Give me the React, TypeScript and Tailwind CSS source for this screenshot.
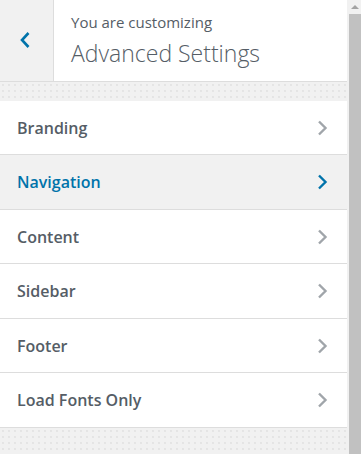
import React from "react";

const Chevron = ({ color }: { color: string }) => (
  <svg width="12" height="18" viewBox="0 0 12 18" fill="none">
    <path d="M3 2.5 L9.5 9 L3 15.5" stroke={color} strokeWidth="2.4" strokeLinecap="butt" strokeLinejoin="miter" />
  </svg>
);

const items = [
  { label: "Branding", h: "h-[54px]" },
  { label: "Navigation", h: "h-[55px]", active: true },
  { label: "Content", h: "h-[54px]" },
  { label: "Sidebar", h: "h-[55px]" },
  { label: "Footer", h: "h-[54px]" },
  { label: "Load Fonts Only", h: "h-[55px]" },
];

const dots = {
  backgroundImage: "radial-gradient(#dedede 0.6px, transparent 0.9px)",
  backgroundSize: "6px 6px",
};

export default function App() {
  return (
    <div className="flex w-[361px] h-[454px] overflow-hidden bg-[#f1f1f1]" style={{ fontFamily: '"Open Sans", "Noto Sans", sans-serif' }}>
      <div className="flex flex-col w-[347px] h-full">
        <div className="flex h-[82px] border-b border-[#dddddd] bg-white">
          <div className="w-[54px] shrink-0 bg-[#f1f1f1] border-r border-[#dddddd] flex items-center justify-center">
            <svg width="14" height="20" viewBox="0 0 14 20" fill="none" className="mr-[4px] -mt-[1px]">
              <path d="M10.5 3 L4 10 L10.5 17" stroke="#0073aa" strokeWidth="2.6" />
            </svg>
          </div>
          <div className="flex flex-col pl-[17px] pt-[12px]">
            <div className="text-[15px] leading-[20px] text-[#555d66]">You are customizing</div>
            <div className="text-[23px] leading-[32px] font-light text-[#555d66] mt-[5px]">Advanced Settings</div>
          </div>
        </div>
        <div className="h-[19px]" style={dots} />
        <div className="flex flex-col">
          {items.map((it) => (
            <div
              key={it.label}
              className={`flex items-center justify-between ${it.h} border-b border-[#dddddd] pl-[17px] pr-[19px] ${it.active ? "bg-[#f1f1f1]" : "bg-white"}`}
            >
              <span className={`text-[16px] font-semibold ${it.active ? "text-[#0073aa]" : "text-[#555d66]"}`}>{it.label}</span>
              <Chevron color={it.active ? "#0073aa" : "#a0a5aa"} />
            </div>
          ))}
        </div>
        <div className="flex-1" style={dots} />
      </div>
      <div className="w-[14px] h-full bg-[#f1f1f1] flex flex-col items-end">
        <div className="w-[12px] h-[14px] flex items-center justify-center">
          <div className="w-0 h-0 border-l-[4px] border-r-[4px] border-b-[4px] border-l-transparent border-r-transparent border-b-[#a3a3a3]" />
        </div>
        <div className="w-[12px] flex-1 bg-[#c1c1c1]" />
      </div>
    </div>
  );
}
